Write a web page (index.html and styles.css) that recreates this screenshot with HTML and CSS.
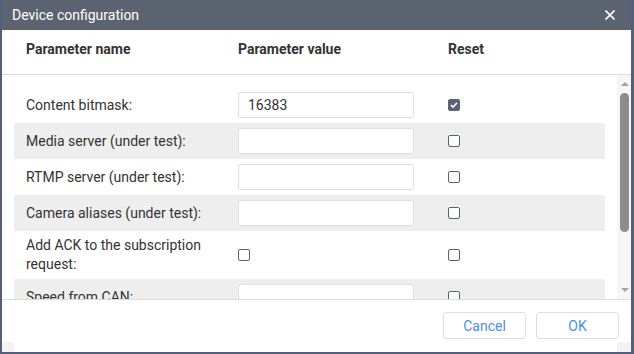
FILE: index.html
```html
<!doctype html>
<html lang="en">
  <head>
    <meta charset="UTF-8" />
    <meta name="viewport" content="width=device-width, initial-scale=1.0" />
    <title>Device configuration</title>
    <link rel="stylesheet" href="styles.css">
  </head>
  <body>
    <div class="dialog">
      <div class="titlebar">
        <span class="title">Device configuration</span>
        <svg class="close" width="10" height="10" viewBox="0 0 10 10">
          <path d="M0.5 0.5 L9.5 9.5 M9.5 0.5 L0.5 9.5" stroke="#fff" stroke-width="1.6" fill="none" />
        </svg>
      </div>

      <div class="thead">
        <div>Parameter name</div>
        <div>Parameter value</div>
        <div>Reset</div>
      </div>

      <div class="body">
        <div class="rows">
          <div class="row">
            <div class="label">Content bitmask:</div>
            <div><input class="field" type="text" value="16383"></div>
            <div><span class="check checked">
              <svg width="8" height="8" viewBox="0 0 8 8"><path d="M1 4.2 L3.1 6.2 L7 1.8" stroke="#fff" stroke-width="1.6" fill="none" /></svg>
            </span></div>
          </div>
          <div class="row">
            <div class="label">Media server (under test):</div>
            <div><input class="field" type="text"></div>
            <div><span class="check"></span></div>
          </div>
          <div class="row">
            <div class="label">RTMP server (under test):</div>
            <div><input class="field" type="text"></div>
            <div><span class="check"></span></div>
          </div>
          <div class="row">
            <div class="label">Camera aliases (under test):</div>
            <div><input class="field" type="text"></div>
            <div><span class="check"></span></div>
          </div>
          <div class="row">
            <div class="label">Add ACK to the subscription request:</div>
            <div><span class="check"></span></div>
            <div><span class="check"></span></div>
          </div>
          <div class="row">
            <div class="label">Speed from CAN:</div>
            <div><input class="field" type="text"></div>
            <div><span class="check"></span></div>
          </div>
        </div>

        <div class="scrollbar">
          <span class="arrow arrow-up"></span>
          <span class="thumb"></span>
          <span class="spacer"></span>
          <span class="arrow arrow-down"></span>
        </div>
      </div>

      <div class="footer">
        <button class="button">Cancel</button>
        <button class="button">OK</button>
      </div>
    </div>
  </body>
</html>
```

FILE: styles.css
```css
body {
  margin: 0;
  padding: 0;
  font-family: Roboto, "Liberation Sans", sans-serif;
  background-color: #fff;
}
.dialog {
  position: relative;
  width: 634px;
  height: 354px;
  box-sizing: border-box;
  border: 2px solid #54607a;
  border-top: 0;
  border-right-width: 3px;
  display: flex;
  flex-direction: column;
  background-color: white;
  overflow: hidden;
}
.titlebar {
  height: 30px;
  flex: none;
  background-color: #5c6370;
  color: #fff;
  display: flex;
  align-items: center;
  justify-content: space-between;
  padding: 0 16px 0 10px;
  font-size: 14px;
}
.thead {
  height: 45px;
  flex: none;
  box-sizing: border-box;
  border-bottom: 1px solid #dcdcdc;
  display: grid;
  grid-template-columns: 200px 198px 1fr;
  column-gap: 12px;
  padding: 11px 0 0 24px;
  font-size: 14px;
  font-weight: 700;
  color: #333;
}
.body {
  height: 224px;
  flex: none;
  display: flex;
  overflow: hidden;
}
.rows {
  flex: 1;
  padding: 12px 12px 0 12px;
  overflow: hidden;
}
.row {
  display: grid;
  grid-template-columns: 200px 198px 1fr;
  column-gap: 12px;
  align-items: center;
  min-height: 36px;
  box-sizing: border-box;
  padding: 5px 12px;
  font-size: 14px;
  line-height: 19px;
  color: #333;
}
.row:nth-child(even) {
  background-color: #eeeeee;
}
.row > div {
  display: flex;
  align-items: center;
}
.field {
  width: 176px;
  height: 26px;
  box-sizing: border-box;
  border: 1px solid #dedede;
  border-radius: 3px;
  padding: 0 9px;
  font-family: Roboto, "Liberation Sans", sans-serif;
  font-size: 14px;
  color: #333;
  background-color: #fff;
  outline: none;
}
.check {
  width: 12px;
  height: 12px;
  box-sizing: border-box;
  border: 1px solid #5c6370;
  border-radius: 2px;
  display: inline-flex;
  align-items: center;
  justify-content: center;
  background-color: #fff;
}
.checked {
  background-color: #5c6370;
}
.scrollbar {
  width: 14px;
  flex: none;
  background-color: #f6f6f6;
  display: flex;
  flex-direction: column;
  align-items: center;
}
.arrow {
  width: 0;
  height: 0;
  border-left: 4px solid transparent;
  border-right: 4px solid transparent;
  margin-left: 1px;
}
.arrow-up {
  border-bottom: 4px solid #a3a3a3;
  margin-top: 7px;
}
.arrow-down {
  border-top: 4px solid #a3a3a3;
  margin-bottom: 7px;
}
.thumb {
  width: 9px;
  height: 139px;
  margin-top: 7px;
  margin-left: 1px;
  border-radius: 5px;
  background-color: #8c8c8c;
}
.spacer {
  flex: 1;
}
.footer {
  flex: 1;
  border-top: 1px solid #dcdcdc;
  display: flex;
  justify-content: flex-end;
  align-items: flex-start;
  gap: 10px;
  padding: 12px 12px 0 0;
}
.footer::before,
.footer::after {
  content: "";
  position: absolute;
  bottom: 0;
  height: 10px;
  background-color: #f3f3f3;
}
.footer::before {
  left: 0;
  width: 12px;
}
.footer::after {
  right: 0;
  width: 14px;
}
.button {
  width: 83px;
  height: 27px;
  background-color: #fff;
  border: 1px solid #dedede;
  border-radius: 3px;
  color: #4d8fe6;
  font-family: Roboto, "Liberation Sans", sans-serif;
  font-size: 14px;
  cursor: pointer;
}
```
